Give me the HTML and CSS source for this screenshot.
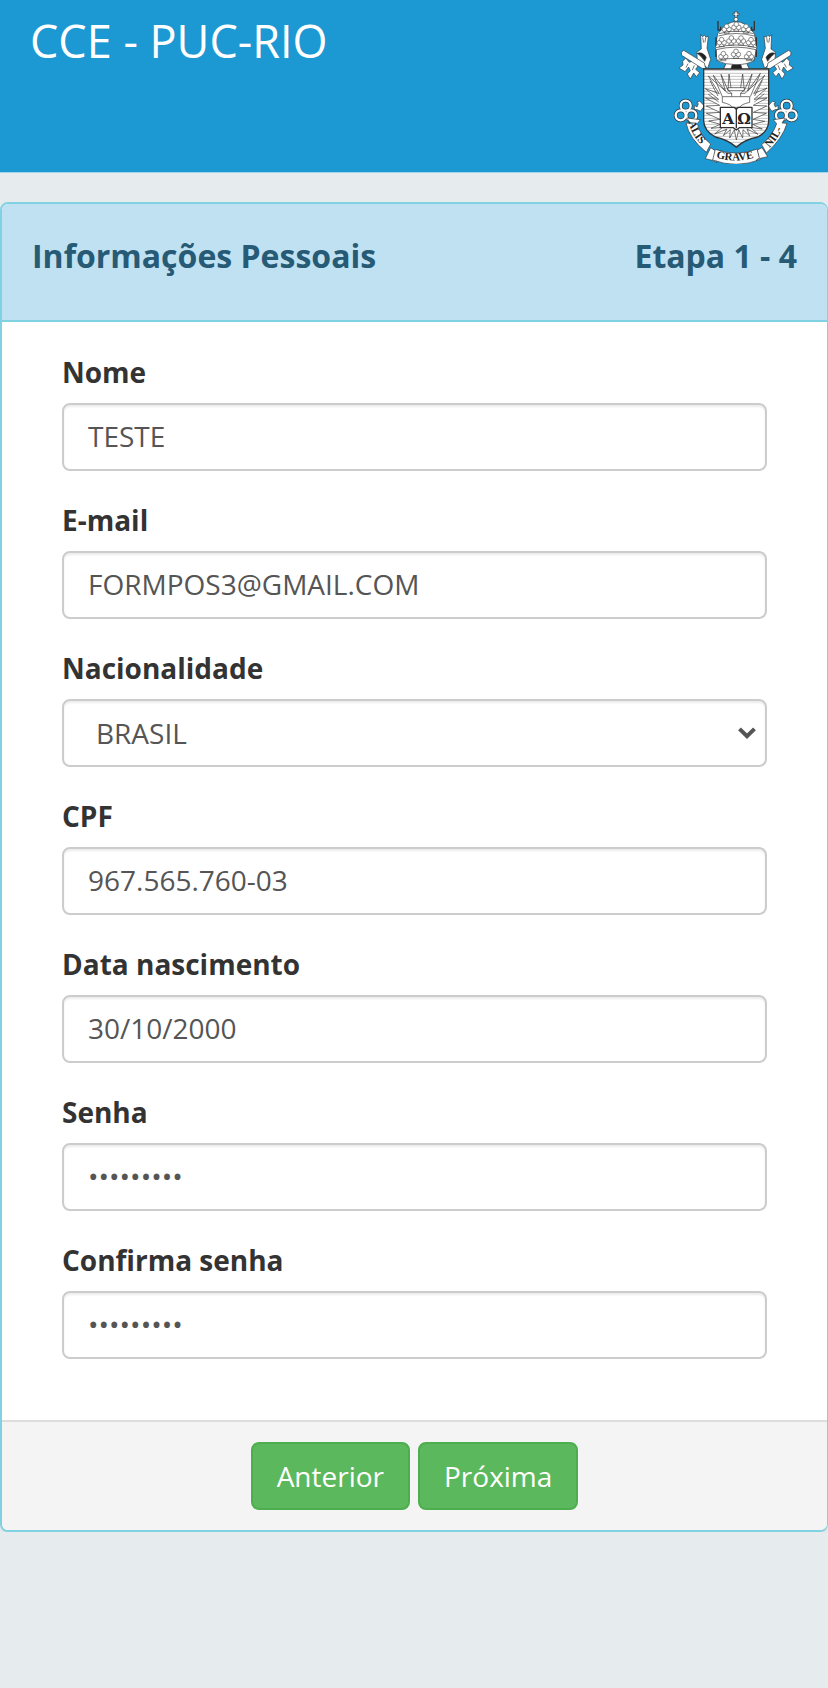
FILE: index.html
```html
<!DOCTYPE html>
<html lang="pt-BR">
<head>
<meta charset="utf-8">
<meta name="viewport" content="width=device-width, initial-scale=1">
<title>CCE - PUC-RIO</title>
<link rel="stylesheet" href="styles.css">
</head>
<body>
<header class="topbar">
  <h1 class="brand">CCE - PUC-RIO</h1>
  <svg class="crest" viewBox="42 30 372 462" role="img" aria-label="Brasão PUC-Rio">
    <defs>
      <pattern id="hatch" width="8" height="9" patternUnits="userSpaceOnUse">
        <rect width="8" height="9" fill="#fff"/>
        <path d="M0 4H8" stroke="#aaa" stroke-width="2"/>
      </pattern>
      <g id="trefoil" fill="#fff" stroke="#555" stroke-width="2">
        <path d="M-3 5L-8 15H8L3 5Z"/>
        <circle cx="-7" cy="3" r="7"/><circle cx="7" cy="3" r="7"/><circle cx="0" cy="-6" r="7"/>
      </g>
      <g id="key">
        <path d="M112 158Q132 143 143 165L136 184Q124 158 112 158Z" fill="#222"/>
        <path d="M122 104L128 110L133 106L138 111L145 109L141 145L152 178L143 205L112 178L110 157L124 147Z" fill="#fff"/>
        <path d="M111 160Q128 154 139 172L134 184Q124 167 111 160Z" fill="#222"/>
        <path d="M68 184L77 174L88 187L99 182L116 195L107 208L119 218L109 230L101 219L91 237L82 222L91 212L86 201L75 215L57 204L69 195Z" fill="#fff"/>
        <path d="M64 157L71 151L133 189L137 206L126 205L65 166Z" fill="#fff"/>
        <path d="M84 191L78 203M103 196L97 210M128 113L131 128M137 112L135 127" fill="none"/>
        <path d="M103 316L111 321L115 311L110 308L119 303L133 318L121 334L112 329L103 328Z" fill="#fff"/>
        <g fill="none" stroke="#333" stroke-width="11"><circle cx="77" cy="317" r="15"/><circle cx="62" cy="346" r="15"/><circle cx="94" cy="346" r="15"/></g>
        <g fill="none" stroke="#fff" stroke-width="7"><circle cx="77" cy="317" r="15"/><circle cx="62" cy="346" r="15"/><circle cx="94" cy="346" r="15"/></g>
      </g>
      <path id="ribbon-left" d="M86 366Q97 413 136 447"/>
      <path id="ribbon-mid" d="M168 473Q226 491 292 471"/>
      <path id="ribbon-right" d="M328 444Q364 406 375 358"/>
    </defs>
    <g stroke="#333" stroke-width="2" stroke-linejoin="round">
      <use href="#key"/>
      <use href="#key" transform="matrix(-1 0 0 1 457 0)"/>
      <path d="M201 186H257L268 209H190Z" fill="#222"/>
      <path d="M200 186L190 209H212L219 186ZM240 186L247 209H269L258 186Z" fill="#fff"/>
      <path d="M225 34H231V40H237V45H231V52H225V45H219V40H225Z" fill="#fff"/>
      <circle cx="228" cy="58" r="6" fill="#fff"/>
      <path d="M183 91Q202 65 228 65Q254 65 274 91L283 100L290 143L282 182Q262 194 228 194Q194 194 171 182L166 143L173 101Z" fill="#fff"/>
      <path d="M174 63V90H182V80M283 63V90H275V80M168 112V137M289 112V137M168 150V171M289 150V171" fill="none" stroke-width="4"/>
      <use href="#trefoil" x="200" y="85"/><use href="#trefoil" x="229" y="79"/><use href="#trefoil" x="258" y="85"/>
      <use href="#trefoil" x="185" y="125"/><use href="#trefoil" x="214" y="120"/><use href="#trefoil" x="243" y="120"/><use href="#trefoil" x="273" y="125"/>
      <use href="#trefoil" x="190" y="167"/><use href="#trefoil" x="228" y="160"/><use href="#trefoil" x="267" y="167"/>
      <path d="M177 101Q228 86 281 101M175 108Q228 93 283 108M168 143Q228 127 288 143M168 149Q228 134 288 149M171 181Q228 169 284 181" fill="none"/>
      <path d="M131 207H326V363Q325 395 293 411Q252 419 229 442Q204 419 166 411Q132 392 131 363Z" fill="url(#hatch)" stroke-width="4"/>
      <g fill="#fff">
        <path d="M204 280L145 228L178 281L136 266L176 298L136 294L179 316L139 318L180 337L139 340L180 358L146 363L181 373L153 385L188 382L164 402L201 387L190 407L211 389L209 414L223 389L229 420L236 389L248 414L249 389L269 408L261 387L294 403L271 382L307 387L278 373L314 364L279 358L319 340L280 337L320 318L280 316L321 294L282 298L321 264L281 281L314 226L255 280Z"/>
        <path d="M187 290L160 226L196 273L183 223L204 271L207 222L214 270M271 290L301 220L263 273L276 222L253 271L248 222L241 270" fill="none"/>
        <path d="M150 242L174 288M145 283L176 306M307 241L284 288M313 281L283 306" fill="none"/>
        <path d="M204 263H253V270L242 279V290H269V307Q243 313 239 322H217Q213 313 187 307V290H215V279L204 270Z"/>
        <path d="M204 272H253M215 290H242" fill="none"/>
        <path d="M181 322H222L229 328L235 322H276V383H238L229 390L220 383H181Z" stroke-width="4"/>
        <path d="M229 328V385" fill="none" stroke-width="4"/>
      </g>
      <g fill="#fff">
        <path d="M80 354L121 359L112 371Q121 408 152 432L139 457Q88 416 78 369L92 370Z"/>
        <path d="M152 443L136 476L157 481L171 488L163 475L166 452Z"/>
        <path d="M166 448Q228 471 292 447L300 479Q228 506 158 480Z"/>
        <path d="M292 450L306 443L323 470L301 475L288 482L298 473Z"/>
        <path d="M340 359L376 354L366 369L381 370Q368 416 319 459L305 434Q338 406 350 371Z"/>
      </g>
    </g>
    <g class="crest-text">
      <g class="crest-book">
        <text x="187" y="371">A</text>
        <text x="232" y="371">Ω</text>
      </g>
      <text><textPath href="#ribbon-left">ALIS</textPath></text>
      <text><textPath href="#ribbon-mid">GRAVE</textPath></text>
      <text><textPath href="#ribbon-right">NIL-</textPath></text>
    </g>
  </svg>
</header>
<main>
  <form class="panel">
    <div class="panel-heading">
      <h2 class="panel-title">Informações Pessoais</h2>
      <span class="panel-title">Etapa 1 - 4</span>
    </div>
    <div class="panel-body">
      <div class="field"><label for="nome">Nome</label><input class="control" id="nome" type="text" value="TESTE"></div>
      <div class="field"><label for="email">E-mail</label><input class="control" id="email" type="text" value="FORMPOS3@GMAIL.COM"></div>
      <div class="field">
        <label for="pais">Nacionalidade</label>
        <div class="select-wrap">
          <select class="control control-select" id="pais"><option>BRASIL</option></select>
          <svg class="chevron" viewBox="0 0 18 12" aria-hidden="true"><path d="M1.500 1.800L9 9.200L16.500 1.800"/></svg>
        </div>
      </div>
      <div class="field"><label for="cpf">CPF</label><input class="control" id="cpf" type="text" value="967.565.760-03"></div>
      <div class="field"><label for="nascimento">Data nascimento</label><input class="control" id="nascimento" type="text" value="30/10/2000"></div>
      <div class="field"><label for="senha">Senha</label><input class="control" id="senha" type="password" value="123456789"></div>
      <div class="field"><label for="confirma">Confirma senha</label><input class="control" id="confirma" type="password" value="123456789"></div>
    </div>
    <div class="panel-footer">
      <button class="btn" type="button">Anterior</button>
      <button class="btn" type="button">Próxima</button>
    </div>
  </form>
</main>
</body>
</html>
```
FILE: styles.css
```css
* {
  box-sizing: border-box;
}

body {
  margin: 0;
  background: #e6ebee;
  color: #333;
  font-family: "Open Sans", "Noto Sans", sans-serif;
  font-size: 28px;
  line-height: 40px;
}

.topbar {
  display: flex;
  justify-content: space-between;
  align-items: flex-start;
  padding: 10px 30px 8px;
  background: #1c98d3;
  border-bottom: 1px solid #a4d6ea;
}

.brand {
  margin: 0;
  color: #fff;
  font-size: 45px;
  font-weight: 400;
  line-height: 62px;
}

.crest {
  width: 124px;
  height: 154px;
}

.crest-text {
  fill: #222;
  font-family: "Liberation Serif", serif;
  font-size: 33px;
  font-weight: 700;
}

.crest-book {
  font-family: "DejaVu Serif", serif;
  font-size: 46px;
}

.panel {
  margin: 29px 0 0;
  background: #fff;
  border: 2px solid #80d2e2;
  border-right-width: 1px;
  border-radius: 8px;
  box-shadow: 0 2px 2px rgba(0, 0, 0, 0.05);
  overflow: hidden;
}

.panel-heading {
  display: flex;
  justify-content: space-between;
  padding: 32px 30px 44px;
  background: #bfe1f2;
  border-bottom: 2px solid #80d2e2;
  color: #265a75;
}

.panel-title {
  margin: 0;
  font-size: 32px;
  font-weight: 700;
  line-height: 40px;
}

.panel-body {
  display: flex;
  flex-direction: column;
  gap: 29px;
  padding: 30px 60px 61px;
}

.field {
  display: flex;
  flex-direction: column;
  gap: 11px;
}

.field label {
  font-weight: 700;
}

.control {
  width: 100%;
  height: 68px;
  padding: 11px 24px 13px;
  background: #fff;
  border: 2px solid #ccc;
  border-radius: 8px;
  box-shadow: inset 0 2px 2px rgba(0, 0, 0, 0.075);
  color: #555;
  font: inherit;
}

.select-wrap {
  position: relative;
}

.control-select {
  display: block;
  appearance: none;
  padding: 12px 32px;
}

.chevron {
  position: absolute;
  top: 28px;
  right: 11px;
  width: 18px;
  height: 12px;
  fill: none;
  stroke: #555;
  stroke-width: 4;
  pointer-events: none;
}

.panel-footer {
  display: flex;
  justify-content: center;
  gap: 8px;
  padding: 20px;
  background: #f4f4f4;
  border-top: 2px solid #ddd;
}

.btn {
  padding: 12px 24px;
  background: #5cb85c;
  border: 2px solid #4cae4c;
  border-radius: 8px;
  color: #fff;
  font: inherit;
}
```
